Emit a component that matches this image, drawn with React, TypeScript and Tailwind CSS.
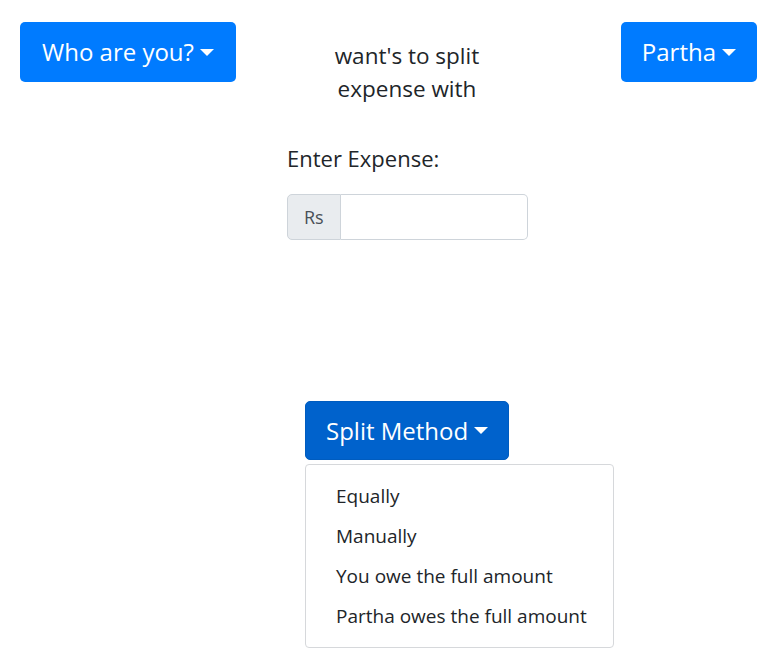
import React from "react";

function Caret() {
  return (
    <span className="ml-[6px] inline-block h-0 w-0 border-x-[7px] border-t-[7px] border-x-transparent border-t-white align-[4px]" />
  );
}

const menuItems = [
  "Equally",
  "Manually",
  "You owe the full amount",
  "Partha owes the full amount",
];

export default function App() {
  return (
    <div
      className="min-h-[672px] w-full bg-white text-[#212529]"
      style={{ fontFamily: '"Open Sans", "Noto Sans", sans-serif' }}
    >
      <div className="flex items-start px-[20px] pt-[22px]">
        <button className="flex h-[60px] items-center whitespace-nowrap rounded-[5px] bg-[#007bff] px-[22px] text-[24px] text-white">
          Who are you?
          <Caret />
        </button>
        <div className="ml-[76px] mt-[17px] w-[190px] text-center text-[22.5px] leading-[33px]">
          want's to split expense with
        </div>
        <button className="ml-auto flex h-[60px] items-center whitespace-nowrap rounded-[5px] bg-[#007bff] px-[21px] text-[24px] text-white">
          Partha
          <Caret />
        </button>
      </div>

      <div className="ml-[287px] mt-[37px] flex flex-col items-start">
        <label className="text-[22px] leading-[33px]">Enter Expense:</label>
        <div className="mt-[19px] flex h-[46px] w-[241px]">
          <span className="flex items-center rounded-l-[5px] border border-[#ced4da] bg-[#e9ecef] px-[16px] text-[18px] text-[#495057]">
            Rs
          </span>
          <input className="min-w-0 flex-1 rounded-r-[5px] border border-l-0 border-[#ced4da] bg-white px-3 outline-none" />
        </div>
      </div>

      <div className="ml-[305px] mt-[161px] flex flex-col items-start">
        <button className="flex h-[59px] items-center whitespace-nowrap rounded-[5px] border border-[#005cbf] bg-[#0062cc] px-[20px] text-[24px] text-white">
          Split Method
          <Caret />
        </button>
        <div className="mt-[4px] w-[309px] rounded-[4px] border border-[#d6d8db] bg-white py-[11px]">
          {menuItems.map((item) => (
            <div key={item} className="h-[40px] whitespace-nowrap px-[30px] text-[19px] leading-[40px] text-[#212529]">
              {item}
            </div>
          ))}
        </div>
      </div>
    </div>
  );
}
